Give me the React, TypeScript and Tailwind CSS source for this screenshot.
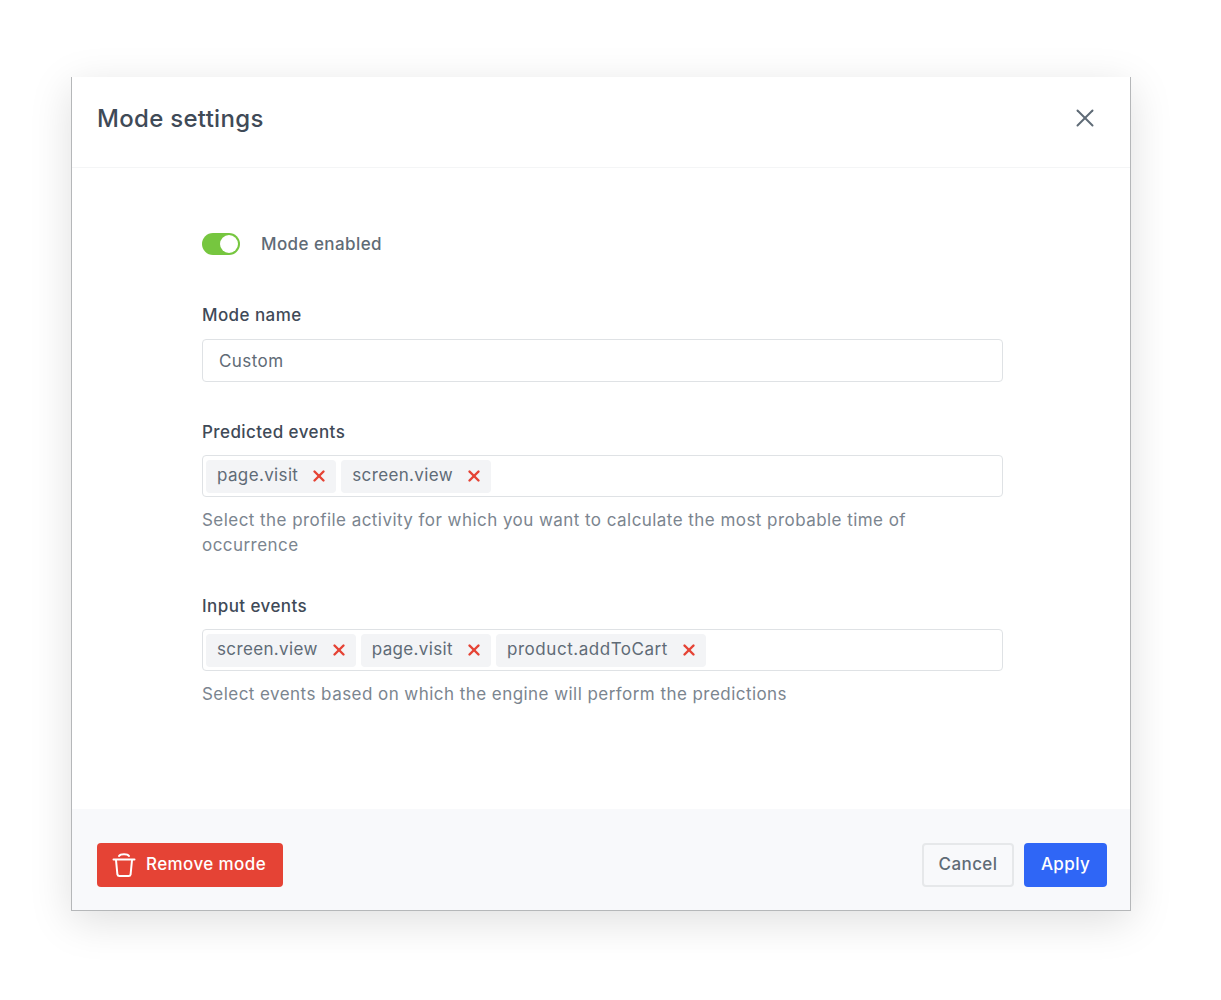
import { X } from 'lucide-react';

const labelClass = 'text-[17px] leading-[24px] font-medium tracking-[0.42px] text-[#3f4a57]';
const hintClass = 'text-[17px] leading-[25px] text-[#7b858f] tracking-[0.45px]';

function Tag({ name }: { name: string }) {
  return (
    <span className="flex h-[33px] items-center gap-[12px] rounded-[4px] bg-[#f3f4f6] pl-[11px] pr-[8px] text-[17px] tracking-[0.36px] text-[#5f6b76]">
      <span className={name.length > 12 ? 'tracking-[0.54px]' : ''}>{name}</span>
      <X className="h-[18px] w-[18px] text-[#e54335]" strokeWidth={3.2} />
    </span>
  );
}

function TagInput({ tags }: { tags: string[] }) {
  return (
    <div className="mt-[11px] flex h-[42px] items-center gap-[5px] rounded-[4px] border border-[#dfe2e5] bg-white pl-[3px]">
      {tags.map((t) => (
        <Tag key={t} name={t} />
      ))}
    </div>
  );
}

export default function App() {
  return (
    <div className="min-h-[1000px] bg-white pl-[71px] pt-[77px] font-['Inter',sans-serif]">
      {/* Modal */}
      <div className="flex h-[834px] w-[1060px] flex-col border-x border-b border-[#b5b7b9] bg-white shadow-[0_10px_40px_rgba(0,0,0,0.13)]">
        <header className="flex h-[91px] flex-shrink-0 items-center justify-between border-b border-[#f4f5f6] pb-[7px] pl-[25px] pr-[30px]">
          <h1 className="text-[24px] font-medium tracking-[0.3px] text-[#3f4a57]">Mode settings</h1>
          <X className="mb-[2px] h-[30px] w-[30px] text-[#5f6b76]" strokeWidth={1.6} />
        </header>

        <main className="flex-1 pl-[130px] pt-[65px]">
          <div className="w-[801px]">
            <div className="flex h-[22px] items-center gap-[21px]">
              <div className="flex h-[22px] w-[38px] items-center justify-end rounded-full bg-[#76c63f] pr-[2px]">
                <div className="h-[18px] w-[18px] rounded-full bg-white" />
              </div>
              <span className="pt-[2px] text-[17px] font-medium tracking-[0.42px] text-[#5f6b76]">Mode enabled</span>
            </div>

            <div className="mt-[48px]">
              <div className={labelClass}>Mode name</div>
              <div className="mt-[12px] flex h-[43px] items-center rounded-[4px] border border-[#dfe2e5] px-[16px] pt-[3px] text-[17px] tracking-[0.42px] text-[#5f6b76]">
                Custom
              </div>
            </div>

            <div className="mt-[38px]">
              <div className={labelClass}>Predicted events</div>
              <TagInput tags={['page.visit', 'screen.view']} />
              <p className={`mt-[11px] w-[740px] ${hintClass}`}>
                Select the profile activity for which you want to calculate the most probable time of occurrence
              </p>
            </div>

            <div className="mt-[36px]">
              <div className={labelClass}>Input events</div>
              <TagInput tags={['screen.view', 'page.visit', 'product.addToCart']} />
              <p className={`mt-[11px] ${hintClass}`}>Select events based on which the engine will perform the predictions</p>
            </div>
          </div>
        </main>

        <footer className="flex h-[101px] flex-shrink-0 items-center justify-between bg-[#f8f9fb] pl-[25px] pr-[23px] pt-[10px]">
          <button className="flex h-[44px] w-[186px] items-center gap-[10px] rounded-[4px] bg-[#e54335] pl-[15px] text-[17px] font-medium tracking-[0.4px] text-white">
            <svg width="24" height="26" viewBox="0 0 24 26" fill="none" stroke="currentColor" strokeWidth="2" strokeLinecap="round" strokeLinejoin="round">
              <path d="M1.5 7.5h21" />
              <path d="M7 4c1.5-2.4 8.5-2.4 10 0" />
              <path d="M4 8l1.4 14.5a2 2 0 0 0 2 1.5h9.2a2 2 0 0 0 2-1.5L20 8" />
            </svg>
            Remove mode
          </button>
          <div className="flex gap-[10px]">
            <button className="h-[44px] w-[92px] rounded-[4px] border-2 border-[#e6e8ea] bg-[#f8f9fb] text-[17px] font-medium tracking-[0.4px] text-[#5f6b76]">
              Cancel
            </button>
            <button className="h-[44px] w-[83px] rounded-[4px] bg-[#2f66f6] text-[17px] font-medium tracking-[0.4px] text-white">
              Apply
            </button>
          </div>
        </footer>
      </div>
    </div>
  );
}
